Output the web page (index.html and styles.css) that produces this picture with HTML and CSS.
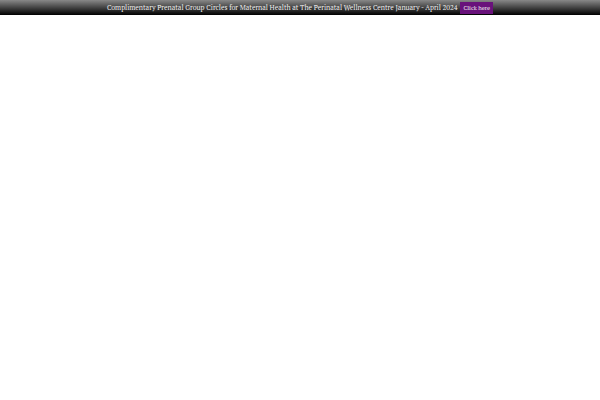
FILE: index.html
```
<!DOCTYPE html>
<html lang="en">
<head>
    <meta charset="UTF-8">
    <meta name="viewport" content="width=device-width, initial-scale=1">
    <title>The Perinatal Wellness Centre</title>
    <link rel="stylesheet" href="styles.css">
</head>
<body>
    <div class="top-bar">
        <span class="message">Complimentary Prenatal Group Circles for Maternal Health at The Perinatal Wellness Centre January - April 2024</span>
        <a class="button" href="#">Click here</a>
    </div>
</body>
</html>
```

FILE: styles.css
```
body {
    margin: 0;
    background: #fff;
    font-family: 'PT Serif', 'Noto Serif', 'Liberation Serif', serif;
}
.top-bar {
    display: flex;
    justify-content: center;
    align-items: center;
    gap: 3px;
    padding: 2px 8px 1px;
    background: linear-gradient(#888, #000);
    color: #eee;
}
.message {
    font-size: 7px;
    line-height: 12px;
}
.button {
    padding: 0 3px;
    background: #69127b;
    color: #eee;
    font-size: 6px;
    line-height: 12px;
    text-decoration: none;
}
```
